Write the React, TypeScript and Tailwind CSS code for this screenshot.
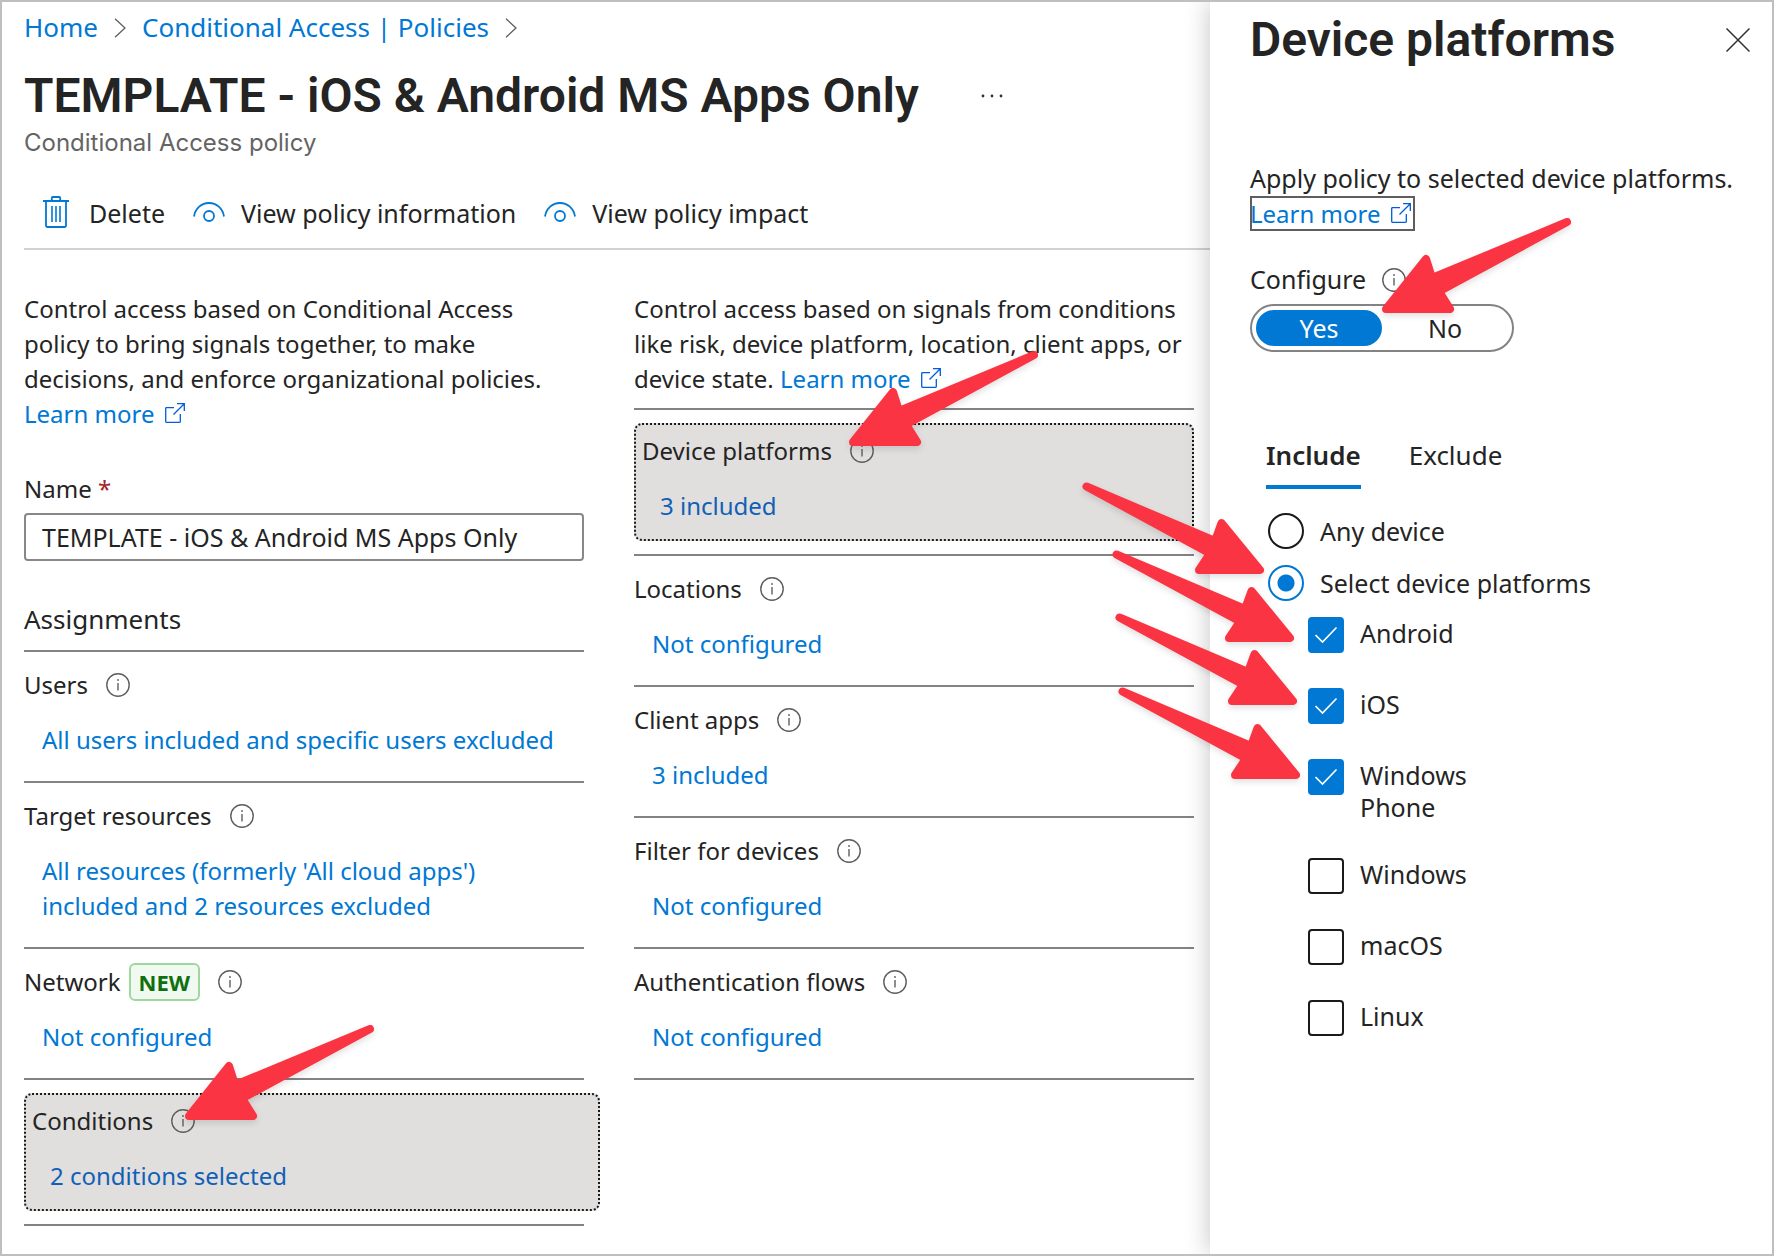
import React, { useState } from "react";
import clsx from "clsx";

const textFont = "font-['Noto_Sans','Open_Sans',sans-serif]";
const headingFont = "font-[Roboto,Inter,sans-serif]";

const InfoIcon = () => (
  <svg className="h-6 w-6 shrink-0" viewBox="0 0 24 24" fill="none" stroke="#605e5c" aria-hidden="true">
    <circle cx="12" cy="12" r="11.2" strokeWidth="1.4" />
    <path d="M12 10v7.5" strokeWidth="1.4" />
    <circle cx="12" cy="7" r="0.9" fill="#605e5c" stroke="none" />
  </svg>
);

const ExternalIcon = () => (
  <svg className="ml-2.5 inline-block h-5 w-5 align-baseline" viewBox="0 0 20 20" fill="none" stroke="#015cda" strokeWidth="1.3" aria-hidden="true">
    <path d="M9 4.7H1.5a.8.8 0 0 0-.8.8v13a.8.8 0 0 0 .8.8h13a.8.8 0 0 0 .8-.8V11" />
    <path d="M12 .7h7.3V8M19.3.7 8.5 11.5" />
  </svg>
);

const ChevronIcon = () => (
  <svg className="h-5 w-3" viewBox="0 0 12 20" fill="none" stroke="#605e5c" strokeWidth="1.3" aria-hidden="true">
    <path d="M1 .8 11 10 1 19.2" />
  </svg>
);

const TrashIcon = () => (
  <svg className="-mt-1 h-8 w-[26px]" viewBox="0 0 26 32" fill="none" stroke="#0078d4" strokeWidth="1.8" aria-hidden="true">
    <path d="M0 5h26M8.8 5V2a1 1 0 0 1 1-1h6.4a1 1 0 0 1 1 1v3" />
    <path d="M3 5v24.5A1.5 1.5 0 0 0 4.500 31h17a1.5 1.5 0 0 0 1.500-1.5V5" />
    <path d="M9 10v16M13 10v16M17 10v16" strokeWidth="1.6" />
  </svg>
);

const EyeIcon = () => (
  <svg className="-mt-1 h-5 w-8" viewBox="0 0 32 20" fill="none" stroke="#0078d4" strokeWidth="1.8" aria-hidden="true">
    <path d="M1 14.500C2.300 6 8.500 1 16 1s13.700 5 15 13.500" />
    <circle cx="16" cy="14" r="5" />
  </svg>
);

interface ArrowProps {
  direction: "left" | "right";
  className: string;
}

// Red callout arrow laid over the control that it points at
const Arrow: React.FC<ArrowProps> = ({ direction, className }) => (
  <svg
    className={clsx("pointer-events-none absolute z-20 h-[102px] w-[194px] drop-shadow-md", className)}
    viewBox="0 0 194 102"
    fill="#fa3442"
    stroke="#fa3442"
    strokeWidth="8"
    strokeLinejoin="round"
    aria-hidden="true"
  >
    {direction === "left" ? (
      <path d="M6 94 46 44 52 63 187 7 59 76.500 70 94Z" />
    ) : (
      <path d="M4.500 6.500 133 61 139.500 43 178 90H117L128 73.500Z" />
    )}
  </svg>
);

interface SettingRowProps {
  label: string;
  value: string;
  badge?: string;
  active?: boolean;
  wide?: boolean;
  arrowClass?: string;
}

const SettingRow: React.FC<SettingRowProps> = ({ label, value, badge, active, wide, arrowClass }) => (
  <li className={clsx("border-b-2 border-[#838383]", active ? "py-[13px]" : "pt-[15px] pb-6")}>
    <div
      className={clsx(
        "relative flex flex-col gap-5",
        active && "rounded-lg border-2 border-dotted border-[#1b1a19] bg-[#e1dfdd] px-1.5 pt-2 pb-4",
        wide && "-mr-4",
      )}
    >
      <div className="flex h-[35px] items-center">
        <span>{label}</span>
        {badge && (
          <span className="ml-2 rounded-md border-2 border-[#9fd89f] bg-[#f1faf1] px-2 text-[22px] leading-[34px] font-bold text-[#0e700e]">
            {badge}
          </span>
        )}
        <span className="ml-[18px]">
          <InfoIcon />
        </span>
      </div>
      <a href="#" className={clsx("mx-[18px]", active ? "text-[#1160b7]" : "text-[#0078d4]")}>
        {value}
      </a>
      {arrowClass && <Arrow direction="left" className={arrowClass} />}
    </div>
  </li>
);

const assignments: SettingRowProps[] = [
  { label: "Users", value: "All users included and specific users excluded" },
  { label: "Target resources", value: "All resources (formerly 'All cloud apps') included and 2 resources excluded" },
  { label: "Network", value: "Not configured", badge: "NEW" },
  { label: "Conditions", value: "2 conditions selected", active: true, wide: true, arrowClass: "left-[157px] -top-[73px]" },
];

const conditions: SettingRowProps[] = [
  { label: "Device platforms", value: "3 included", active: true, arrowClass: "left-[211px] -top-[77px]" },
  { label: "Locations", value: "Not configured" },
  { label: "Client apps", value: "3 included" },
  { label: "Filter for devices", value: "Not configured" },
  { label: "Authentication flows", value: "Not configured" },
];

const platforms = [
  { name: "Android", arrowClass: "-left-[196px] -top-[69px]" },
  { name: "iOS", arrowClass: "-left-[193px] -top-[77px]" },
  { name: "Windows Phone", arrowClass: "-left-[190px] -top-[74px]" },
  { name: "Windows" },
  { name: "macOS" },
  { name: "Linux" },
];

const radioClass =
  "h-9 w-9 shrink-0 appearance-none rounded-full border-2 border-[#1b1a19] bg-white checked:border-[#0078d4] checked:bg-[radial-gradient(circle,#0078d4_8px,white_9px)]";

const DevicePlatformsPanel = () => {
  const [configure, setConfigure] = useState(true);
  const [tab, setTab] = useState<"Include" | "Exclude">("Include");
  const [scope, setScope] = useState<"any" | "select">("select");
  const [selected, setSelected] = useState<string[]>(["Android", "iOS", "Windows Phone"]);

  const togglePlatform = (name: string) => {
    setSelected((prev) => (prev.includes(name) ? prev.filter((item) => item !== name) : [...prev, name]));
  };

  return (
    <aside className="relative z-10 w-[562px] shrink-0 bg-white pt-2 pr-[22px] pl-10 text-[25px] shadow-[0_0_24px_rgba(0,0,0,0.24)]">
      <div className="flex items-center justify-between pt-0.5">
        <h2 className={clsx("text-5xl leading-[56px] font-semibold", headingFont)}>Device platforms</h2>
        <button type="button" aria-label="Close">
          <svg className="h-6 w-6" viewBox="0 0 24 24" stroke="#323130" strokeWidth="1.5" aria-hidden="true">
            <path d="M.5.500 23.500 23.500M23.500.500.500 23.500" />
          </svg>
        </button>
      </div>

      <p className="mt-[93px] whitespace-nowrap">Apply policy to selected device platforms.</p>
      <a href="#" className="inline-block pr-1 align-top text-2xl leading-[35px] text-[#0078d4] outline-2 -outline-offset-2 outline-[#605e5c]">
        Learn more
        <ExternalIcon />
      </a>

      <div className="mt-[31px] flex h-[35px] items-center gap-4">
        <span>Configure</span>
        <InfoIcon />
      </div>
      <div className="relative mt-[7px] flex h-12 w-[264px] rounded-full border-2 border-[#838383] p-1">
        <button
          type="button"
          aria-pressed={configure}
          className={clsx("flex-1 rounded-full leading-9", configure && "bg-[#0078d4] text-white")}
          onClick={() => setConfigure(true)}
        >
          Yes
        </button>
        <button
          type="button"
          aria-pressed={!configure}
          className={clsx("flex-1 rounded-full leading-9", !configure && "bg-[#0078d4] text-white")}
          onClick={() => setConfigure(false)}
        >
          No
        </button>
        <Arrow direction="left" className="left-32 -top-[91px]" />
      </div>

      <div role="tablist" className="mt-[86px] flex gap-12 pl-4">
        {(["Include", "Exclude"] as const).map((name) => (
          <button
            key={name}
            type="button"
            role="tab"
            aria-selected={tab === name}
            className={clsx(
              "border-b-4 pb-3 text-[26px] leading-[35px]",
              tab === name ? "border-[#0078d4] font-semibold" : "border-transparent",
            )}
            onClick={() => setTab(name)}
          >
            {name}
          </button>
        ))}
      </div>

      <div className="mt-6 flex flex-col gap-4 pl-[18px]">
        <label className="flex items-center gap-4">
          <input type="radio" name="scope" className={radioClass} checked={scope === "any"} onChange={() => setScope("any")} />
          Any device
        </label>
        <label className="relative flex items-center gap-4">
          <input type="radio" name="scope" className={radioClass} checked={scope === "select"} onChange={() => setScope("select")} />
          Select device platforms
          <Arrow direction="right" className="-left-[186px] -top-[85px]" />
        </label>
      </div>

      <div className="mt-4 flex w-[180px] flex-col gap-[35px] pl-[58px]">
        {platforms.map(({ name, arrowClass }) => (
          <label key={name} className="relative flex items-start gap-4 leading-8">
            <span className="relative h-9 w-9 shrink-0">
              <input
                type="checkbox"
                className="peer block h-9 w-9 appearance-none rounded-sm border-2 border-[#1b1a19] bg-white checked:border-[#0078d4] checked:bg-[#0078d4]"
                checked={selected.includes(name)}
                onChange={() => togglePlatform(name)}
              />
              <svg
                className="pointer-events-none absolute inset-0 hidden h-9 w-9 peer-checked:block"
                viewBox="0 0 36 36"
                fill="none"
                stroke="white"
                strokeWidth="1.700"
                aria-hidden="true"
              >
                <path d="m7.500 18 7 7L28.500 10.500" />
              </svg>
            </span>
            {name}
            {arrowClass && <Arrow direction="right" className={arrowClass} />}
          </label>
        ))}
      </div>
    </aside>
  );
};

export default function App() {
  const [policyName, setPolicyName] = useState("TEMPLATE - iOS & Android MS Apps Only");

  return (
    <div className={clsx("flex min-h-screen overflow-hidden border-2 border-[#bfbfbf] bg-white text-2xl leading-[35px] text-[#242424]", textFont)}>
      <main className="min-w-0 flex-1 pt-2 pl-[22px]">
        <nav aria-label="Breadcrumb" className="flex items-center gap-4 text-[26px] text-[#0078d4]">
          <a href="#">Home</a>
          <ChevronIcon />
          <a href="#">Conditional Access | Policies</a>
          <ChevronIcon />
        </nav>

        <div className="mt-[23px] flex items-center gap-[62px]">
          <h1 className={clsx("text-5xl leading-[56px] font-semibold whitespace-nowrap", headingFont)}>
            TEMPLATE - iOS &amp; Android MS Apps Only
          </h1>
          <button type="button" aria-label="More actions">
            <svg className="h-1 w-6" viewBox="0 0 24 4" fill="#323130" aria-hidden="true">
              <circle cx="2" cy="2" r="1.400" />
              <circle cx="11" cy="2" r="1.400" />
              <circle cx="20" cy="2" r="1.400" />
            </svg>
          </button>
        </div>
        <p className="mt-[3px] font-[Inter,sans-serif] text-2xl leading-8 text-[#646464]">Conditional Access policy</p>

        <div className="mt-[37px] flex gap-7 border-b-2 border-[#d2d2d2] pb-[17px] pl-[19px] text-[25px]">
          <button type="button" className="flex items-center gap-5">
            <TrashIcon />
            Delete
          </button>
          <button type="button" className="flex items-center gap-4">
            <EyeIcon />
            View policy information
          </button>
          <button type="button" className="flex items-center gap-4">
            <EyeIcon />
            View policy impact
          </button>
        </div>

        <div className="flex items-start gap-[50px] pt-[41px] pr-4">
          <section className="min-w-0 flex-1">
            <p>
              Control access based on Conditional Access policy to bring signals together, to make decisions, and enforce
              organizational policies.{" "}
              <a href="#" className="whitespace-nowrap text-[#0078d4]">
                Learn more
                <ExternalIcon />
              </a>
            </p>
            <label htmlFor="policy-name" className="mt-10 block">
              Name <span className="text-[#a4262c]">*</span>
            </label>
            <input
              id="policy-name"
              type="text"
              className="mt-[7px] block h-12 w-full rounded-sm border-2 border-[#8a8886] px-4 text-[25px]"
              value={policyName}
              onChange={(e) => setPolicyName(e.target.value)}
            />
            <h3 className="mt-[41px] border-b-2 border-[#838383] pb-[13px] text-[26px]">Assignments</h3>
            <ul>
              {assignments.map((row) => (
                <SettingRow key={row.label} {...row} />
              ))}
            </ul>
          </section>

          <section className="min-w-0 flex-1">
            <p className="border-b-2 border-[#838383] pb-3">
              Control access based on signals from conditions like risk, device platform, location, client apps, or device
              state.{" "}
              <a href="#" className="whitespace-nowrap text-[#0078d4]">
                Learn more
                <ExternalIcon />
              </a>
            </p>
            <ul>
              {conditions.map((row) => (
                <SettingRow key={row.label} {...row} />
              ))}
            </ul>
          </section>
        </div>
      </main>

      <DevicePlatformsPanel />
    </div>
  );
}
